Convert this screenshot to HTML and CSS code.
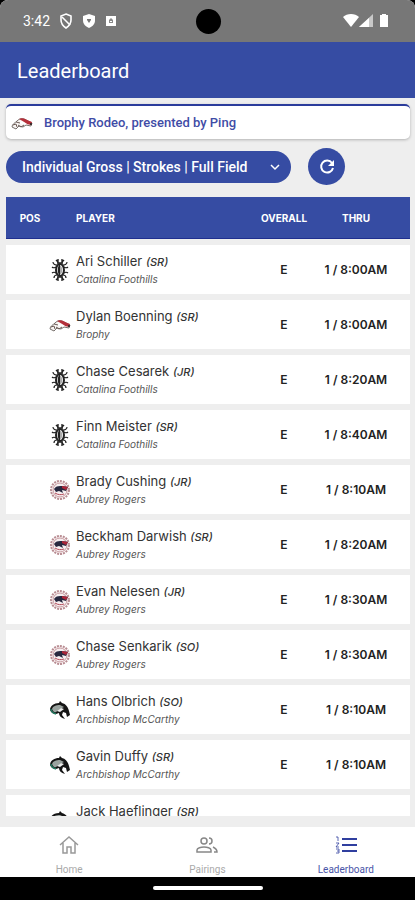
FILE: index.html
```html
<!DOCTYPE html>
<html lang="en">
<head>
  <meta charset="UTF-8" />
  <meta name="viewport" content="width=device-width, initial-scale=1.0" />
  <title>Leaderboard</title>
  <link rel="stylesheet" href="styles.css">
</head>
<body>
  <!-- shared icons -->
  <svg class="sprite" aria-hidden="true">
    <symbol id="catalina" viewBox="0 0 22 22">
      <g fill="none" stroke="#222">
        <path d="M9 0v4M13 0v4M9 18v4M13 18v4M7 1l2 2M15 1l-2 2M7 21l2-2M15 21l-2-2" stroke-width="1.4"/>
        <path d="M4 3c0 2 2 3 4 3M18 3c0 2-2 3-4 3M3 8c1 1 3 1 4 0M19 8c-1 1-3 1-4 0M3 14c1-1 3-1 4 0M19 14c-1-1-3-1-4 0M5 19c0-2 1-3 3-3M17 19c0-2-1-3-3-3" stroke-width="1.2"/>
        <ellipse cx="11" cy="11" rx="4" ry="6" stroke-width="2"/>
        <path d="M8 4h6M8 18h6" stroke-width="1.4"/>
      </g>
      <path d="M11 5v12c-3-2-3-10 0-12z" fill="#222"/>
      <path d="M11 6c3 2 3 8 0 10z" fill="#aaa"/>
    </symbol>
    <symbol id="brophy" viewBox="0 0 22 22">
      <path d="M1 15c0-3 3-4 5-6 3-3 6-3 9-1l6 3-1 3-5-1-3 2-4-1-3 3z" fill="#f7f4f2" stroke="#77706c" stroke-width="1"/>
      <path d="M8 7c4-2 7 1 13 3l-1 3-4-1c-2-2-5-3-8-5z" fill="#b5303a"/>
      <path d="M10 9l6 3-4 1-4-2z" fill="#fff"/>
      <path d="M2 13l3-1 1 3M7 13l3 2 3-2M5 10l4 1" fill="none" stroke="#6b5a55" stroke-width="1"/>
      <circle cx="20" cy="12" r="1" fill="#222"/>
    </symbol>
    <symbol id="aubrey" viewBox="0 0 22 22">
      <circle cx="11" cy="11" r="9" fill="#fbf4f4" stroke="#b98d93" stroke-width="2" stroke-dasharray="2 1"/>
      <circle cx="11" cy="11" r="7" fill="#f6eef0" stroke="#c79aa0" stroke-width="1"/>
      <path d="M5 10c3-4 7-3 14-2l-2 4-4-1 1 3-4-2-3 1z" fill="#28283f"/>
      <path d="M13 7l6 1-2 3-4-2z" fill="#ad2438"/>
      <path d="M6 14c3 2 6 2 9 1" fill="none" stroke="#b54a58" stroke-width="1"/>
    </symbol>
    <symbol id="mccarthy" viewBox="0 0 22 22">
      <path d="M1 11c0-4 4-7 9-7l1-2 2 2c4 1 6 4 7 8l1 4-3 2-1-4-3-1-1 3 3 4c-4-1-6-3-6-6l-3 1c-2 0-5-1-6-4z" fill="#151515"/>
      <path d="M3 10c1-3 4-4 8-4l4 2-4 2-4 3c-2 1-3-1-4-3z" fill="#9aa39f"/>
      <path d="M8 12l4-3 3 1-4 3z" fill="#eee"/>
      <path d="M2 10c0 3 2 4 5 5" fill="none" stroke="#247a61" stroke-width="1.5"/>
    </symbol>
  </svg>

  <div class="app">
    <div class="status-bar">
      <span class="time">3:42</span>
      <svg width="14" height="16" viewBox="0 0 14 16" fill="none" stroke="#fff" stroke-width="1.6"><path d="M7 1l5 2v4c0 4-2 6-5 8-3-2-5-4-5-8V3z"/><path d="M3 4l8 8"/></svg>
      <svg width="14" height="16" viewBox="0 0 14 16"><path d="M7 1l6 2v4c0 4-2 6-6 8-4-2-6-4-6-8V3z" fill="#fff"/><path d="M5 6h4v1L7 10 5 7z" fill="#777"/></svg>
      <svg width="12" height="12" viewBox="0 0 12 12"><path d="M1 1h10v10H1z" fill="#fff"/><path d="M4 8V5l2-2 2 2v3z" fill="#888"/><path d="M5 6h2v1H5z" fill="#fff"/></svg>
      <span class="camera"></span>
      <svg class="signals" width="46" height="16" viewBox="0 0 46 16" fill="#fff">
        <path d="M0 4C4 0 12 0 16 4L8 14z"/>
        <path d="M30 1v13H16z" opacity=".6"/><path d="M26 5v9H16z"/>
        <path d="M37 2h2V1h4v1h2v12h-8z"/>
      </svg>
    </div>

    <header class="app-bar">
      <h1>Leaderboard</h1>
    </header>

    <main>
      <div class="event-card">
        <svg width="22" height="22"><use href="#brophy"/></svg>
        <span>Brophy Rodeo, presented by Ping</span>
      </div>

      <div class="controls">
        <button type="button" class="filter">
          Individual Gross | Strokes | Full Field
          <svg width="10" height="8" viewBox="0 0 10 8" fill="none" stroke="#fff" stroke-width="1.5"><path d="M1 2l4 4 4-4"/></svg>
        </button>
        <button type="button" class="refresh" aria-label="Refresh">
          <svg width="18" height="18" viewBox="0 0 18 18"><path d="M14 5a6 6 0 1 0 1 5" fill="none" stroke="#fff" stroke-width="2"/><path d="M16 2v6h-6z" fill="#fff"/></svg>
        </button>
      </div>

      <div class="list">
        <table>
          <thead>
            <tr>
              <th class="pos">POS</th>
              <th class="logo"></th>
              <th class="player">PLAYER</th>
              <th class="overall">OVERALL</th>
              <th class="thru">THRU</th>
            </tr>
          </thead>
          <tbody>
            <tr>
              <td></td>
              <td><svg width="22" height="22"><use href="#catalina"/></svg></td>
              <td class="player"><div class="name">Ari Schiller <em>(SR)</em></div><div class="school">Catalina Foothills</div></td>
              <td class="overall">E</td>
              <td class="thru">1 / 8:00AM</td>
            </tr>
            <tr>
              <td></td>
              <td><svg width="22" height="22"><use href="#brophy"/></svg></td>
              <td class="player"><div class="name">Dylan Boenning <em>(SR)</em></div><div class="school">Brophy</div></td>
              <td class="overall">E</td>
              <td class="thru">1 / 8:00AM</td>
            </tr>
            <tr>
              <td></td>
              <td><svg width="22" height="22"><use href="#catalina"/></svg></td>
              <td class="player"><div class="name">Chase Cesarek <em>(JR)</em></div><div class="school">Catalina Foothills</div></td>
              <td class="overall">E</td>
              <td class="thru">1 / 8:20AM</td>
            </tr>
            <tr>
              <td></td>
              <td><svg width="22" height="22"><use href="#catalina"/></svg></td>
              <td class="player"><div class="name">Finn Meister <em>(SR)</em></div><div class="school">Catalina Foothills</div></td>
              <td class="overall">E</td>
              <td class="thru">1 / 8:40AM</td>
            </tr>
            <tr>
              <td></td>
              <td><svg width="22" height="22"><use href="#aubrey"/></svg></td>
              <td class="player"><div class="name">Brady Cushing <em>(JR)</em></div><div class="school">Aubrey Rogers</div></td>
              <td class="overall">E</td>
              <td class="thru">1 / 8:10AM</td>
            </tr>
            <tr>
              <td></td>
              <td><svg width="22" height="22"><use href="#aubrey"/></svg></td>
              <td class="player"><div class="name">Beckham Darwish <em>(SR)</em></div><div class="school">Aubrey Rogers</div></td>
              <td class="overall">E</td>
              <td class="thru">1 / 8:20AM</td>
            </tr>
            <tr>
              <td></td>
              <td><svg width="22" height="22"><use href="#aubrey"/></svg></td>
              <td class="player"><div class="name">Evan Nelesen <em>(JR)</em></div><div class="school">Aubrey Rogers</div></td>
              <td class="overall">E</td>
              <td class="thru">1 / 8:30AM</td>
            </tr>
            <tr>
              <td></td>
              <td><svg width="22" height="22"><use href="#aubrey"/></svg></td>
              <td class="player"><div class="name">Chase Senkarik <em>(SO)</em></div><div class="school">Aubrey Rogers</div></td>
              <td class="overall">E</td>
              <td class="thru">1 / 8:30AM</td>
            </tr>
            <tr>
              <td></td>
              <td><svg width="22" height="22"><use href="#mccarthy"/></svg></td>
              <td class="player"><div class="name">Hans Olbrich <em>(SO)</em></div><div class="school">Archbishop McCarthy</div></td>
              <td class="overall">E</td>
              <td class="thru">1 / 8:10AM</td>
            </tr>
            <tr>
              <td></td>
              <td><svg width="22" height="22"><use href="#mccarthy"/></svg></td>
              <td class="player"><div class="name">Gavin Duffy <em>(SR)</em></div><div class="school">Archbishop McCarthy</div></td>
              <td class="overall">E</td>
              <td class="thru">1 / 8:10AM</td>
            </tr>
            <tr>
              <td></td>
              <td><svg width="22" height="22"><use href="#mccarthy"/></svg></td>
              <td class="player"><div class="name">Jack Haeflinger <em>(SR)</em></div><div class="school"></div></td>
              <td></td>
              <td></td>
            </tr>
          </tbody>
        </table>
      </div>
    </main>

    <nav class="tabs">
      <a href="#home">
        <svg width="22" height="22" viewBox="0 0 22 22" fill="none" stroke="#999" stroke-width="1.5"><path d="M2 11l9-8 9 8M5 9v10h4v-6h4v6h4V9"/></svg>
        Home
      </a>
      <a href="#pairings">
        <svg width="22" height="22" viewBox="0 0 22 22" fill="none" stroke="#888" stroke-width="1.5"><circle cx="8" cy="7" r="3"/><path d="M1 18v-2c0-2 4-3 7-3s7 1 7 3v2zM13 4a3 3 0 0 1 0 6M17 13c2 1 4 2 4 5h-3"/></svg>
        Pairings
      </a>
      <a href="#leaderboard" class="active">
        <svg width="22" height="22" viewBox="0 0 22 22" fill="none" stroke="#303f9f"><path d="M7 5h15M7 11h15M7 17h15" stroke-width="2"/><path d="M1 3h2v4M1 9h3l-3 4h3M1 15h3v4H1M2 17h2" stroke-width=".8"/></svg>
        Leaderboard
      </a>
    </nav>

    <div class="gesture-bar"><span></span></div>
  </div>
</body>
</html>
```
FILE: styles.css
```css
* {
  box-sizing: border-box;
}

body {
  margin: 0;
  font-family: Roboto, sans-serif;
  background-color: #000;
  color: #222;
}

svg {
  display: block;
  flex-shrink: 0;
}

.sprite {
  display: none;
}

.app {
  display: flex;
  flex-direction: column;
  height: 100vh;
  overflow: hidden;
  border-radius: 8px 8px 0 0;
  background-color: #eee;
}

.status-bar {
  position: relative;
  display: flex;
  align-items: center;
  gap: 9px;
  height: 42px;
  padding: 0 26px 0 23px;
  background-color: #777;
  color: #fff;
  font-size: 14px;
}

.camera {
  position: absolute;
  top: 9px;
  left: calc(50% - 12px);
  width: 25px;
  height: 25px;
  border-radius: 50%;
  background-color: #000;
}

.signals {
  margin-left: auto;
}

.app-bar {
  display: flex;
  align-items: center;
  height: 56px;
  padding: 2px 17px 0;
  background-color: #364ca3;
  color: #fff;
}

.app-bar h1 {
  margin: 0;
  font-size: 20px;
  font-weight: 400;
}

main {
  display: flex;
  flex-direction: column;
  flex: 1;
  min-height: 0;
  padding: 6px 5px 11px 6px;
}

.event-card {
  display: flex;
  align-items: center;
  gap: 11px;
  height: 35px;
  padding: 0 5px;
  border-top: 2px solid #2b3c9b;
  border-radius: 5px;
  background-color: #fff;
  box-shadow: 0 1px 3px rgba(0, 0, 0, 0.25);
  color: #3f4ca6;
  font-size: 13px;
  font-weight: 500;
}

.controls {
  display: flex;
  align-items: center;
  gap: 17px;
  padding: 9px 0 6px;
}

button {
  display: flex;
  align-items: center;
  border: none;
  background-color: #364ca3;
  color: #fff;
  font-family: inherit;
  cursor: pointer;
}

.filter {
  gap: 23px;
  height: 32px;
  padding: 0 11px 0 16px;
  border-radius: 16px;
  font-size: 14px;
  font-weight: 500;
}

.refresh {
  justify-content: center;
  width: 37px;
  height: 37px;
  padding: 0;
  border-radius: 50%;
}

.list {
  flex: 1;
  min-height: 0;
  overflow: hidden;
}

table {
  width: 100%;
  table-layout: fixed;
  border-collapse: separate;
  border-spacing: 0 6px;
  font-family: Inter, sans-serif;
}

th {
  height: 42px;
  padding: 0;
  background-color: #364ca3;
  border-bottom: 1px solid #1f2f8f;
  color: #fff;
  font-size: 10px;
  font-weight: 700;
}

td {
  height: 49px;
  padding: 0;
  background-color: #fff;
  font-size: 12px;
  font-weight: 600;
}

.pos {
  width: 43px;
  padding-left: 5px;
}

.logo {
  width: 27px;
}

.player {
  text-align: left;
}

.overall {
  width: 72px;
  text-align: center;
}

.thru {
  width: 90px;
  padding-right: 18px;
  text-align: center;
  white-space: nowrap;
}

.name {
  font-size: 13px;
  font-weight: 400;
  line-height: 17px;
  color: #333;
}

.name em {
  font-size: 11px;
  font-weight: 500;
}

.school {
  min-height: 16px;
  font-size: 10px;
  font-style: italic;
  font-weight: 400;
  line-height: 16px;
  color: #555;
}

.tabs {
  display: flex;
  height: 50px;
  background-color: #fff;
}

.tabs a {
  display: flex;
  flex: 1;
  flex-direction: column;
  align-items: center;
  gap: 7px;
  padding-top: 7px;
  color: #aaa;
  font-size: 10px;
  line-height: 14px;
  text-decoration: none;
}

.tabs .active {
  color: #4a55a8;
}

.gesture-bar {
  display: flex;
  justify-content: center;
  height: 23px;
  padding-top: 9px;
  background-color: #000;
}

.gesture-bar span {
  width: 110px;
  height: 4px;
  border-radius: 2px;
  background-color: #fff;
}
```
